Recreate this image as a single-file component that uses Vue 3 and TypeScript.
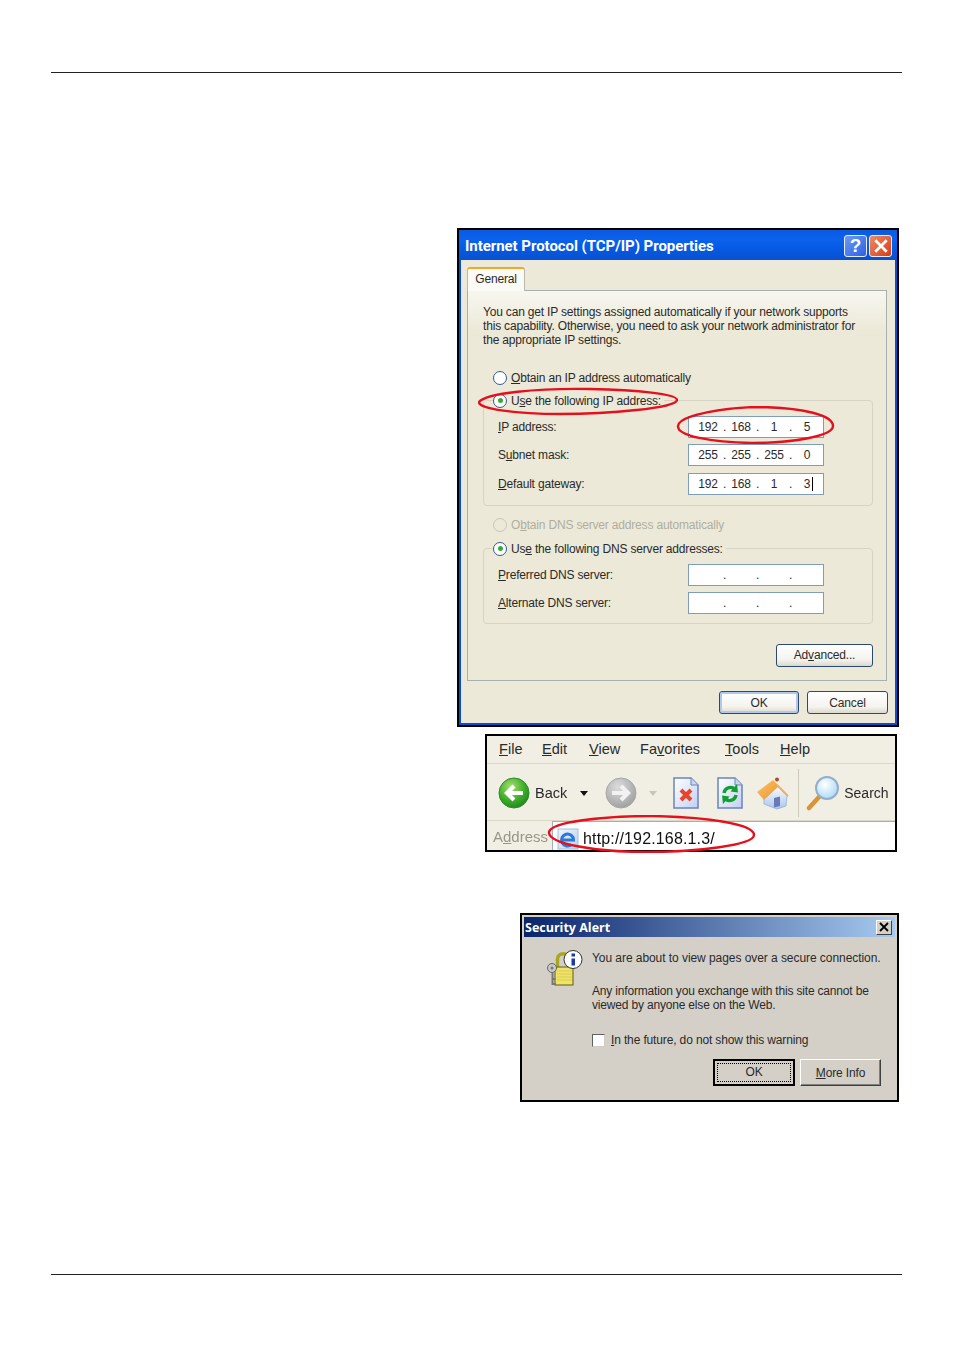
<script setup lang="ts">
interface IpRow {
  pre: string
  key: string
  post: string
  octets: string[]
  caret?: boolean
}

const ipRows: IpRow[] = [
  { pre: '', key: 'I', post: 'P address:', octets: ['192', '168', '1', '5'] },
  { pre: 'S', key: 'u', post: 'bnet mask:', octets: ['255', '255', '255', '0'] },
  { pre: '', key: 'D', post: 'efault gateway:', octets: ['192', '168', '1', '3'], caret: true },
]

const dnsRows: IpRow[] = [
  { pre: '', key: 'P', post: 'referred DNS server:', octets: ['', '', '', ''] },
  { pre: '', key: 'A', post: 'lternate DNS server:', octets: ['', '', '', ''] },
]

const menus = [
  { key: 'F', post: 'ile', pre: '', width: 43 },
  { key: 'E', post: 'dit', pre: '', width: 47 },
  { key: 'V', post: 'iew', pre: '', width: 51 },
  { key: 'v', post: 'orites', pre: 'Fa', width: 85 },
  { key: 'T', post: 'ools', pre: '', width: 55 },
  { key: 'H', post: 'elp', pre: '', width: 40 },
]
</script>

<template>
  <div class="page">
    <hr class="rule" />

    <div class="shots">
      <!-- TCP/IP dialog -->
      <section class="xp">
        <div class="xp-inner">
          <header class="xp-title">
            <span class="xp-title-text">Internet Protocol (TCP/IP) Properties</span>
            <span class="cap-btn cap-help">?</span>
            <span class="cap-btn cap-close">
              <svg viewBox="0 0 14 14" width="16" height="16">
                <path d="M2 2 L12 12 M12 2 L2 12" stroke="#fff" stroke-width="2.4" />
              </svg>
            </span>
          </header>

          <div class="xp-body">
            <div class="tab">General</div>
            <div class="panel">
              <p class="intro">
                You can get IP settings assigned automatically if your network supports<br />
                this capability. Otherwise, you need to ask your network administrator for<br />
                the appropriate IP settings.
              </p>

              <label class="radio-line first">
                <span class="radio"></span>
                <span><u>O</u>btain an IP address automatically</span>
              </label>

              <fieldset class="group group-ip">
                <legend class="radio-line">
                  <span class="radio on"></span>
                  <span>U<u>s</u>e the following IP address:</span>
                </legend>
                <div v-for="row in ipRows" :key="row.post" class="ip-row">
                  <span class="ip-label">{{ row.pre }}<u>{{ row.key }}</u>{{ row.post }}</span>
                  <span class="ip-field">
                    <template v-for="(o, i) in row.octets" :key="i">
                      <span class="oct" :class="{ caret: row.caret && i === 3 }">{{ o }}</span>
                      <span v-if="i < 3" class="dot">.</span>
                    </template>
                  </span>
                </div>
              </fieldset>

              <label class="radio-line off">
                <span class="radio"></span>
                <span>O<u>b</u>tain DNS server address automatically</span>
              </label>

              <fieldset class="group group-dns">
                <legend class="radio-line">
                  <span class="radio on"></span>
                  <span>Us<u>e</u> the following DNS server addresses:</span>
                </legend>
                <div v-for="row in dnsRows" :key="row.post" class="ip-row">
                  <span class="ip-label">{{ row.pre }}<u>{{ row.key }}</u>{{ row.post }}</span>
                  <span class="ip-field">
                    <template v-for="(o, i) in row.octets" :key="i">
                      <span class="oct">{{ o }}</span>
                      <span v-if="i < 3" class="dot">.</span>
                    </template>
                  </span>
                </div>
              </fieldset>

              <div class="adv-row">
                <button class="xp-btn adv">Ad<u>v</u>anced...</button>
              </div>
            </div>

            <div class="xp-actions">
              <button class="xp-btn ok">OK</button>
              <button class="xp-btn cancel">Cancel</button>
            </div>
          </div>
        </div>

        <svg class="ring ring-radio" viewBox="0 0 200 30" width="200" height="30">
          <path d="M1 15 C8 6 60 1 112 2 C160 3 199 7 199 13 C199 21 130 27 82 27 C40 27 0 22 1 15 Z" fill="none" stroke="#e6101c" stroke-width="2.4" />
        </svg>
        <svg class="ring ring-ip" viewBox="0 0 159 38" width="159" height="38">
          <path d="M2 20 C3 9 50 1 86 1 C127 2 157 9 157 20 C157 30 117 37 76 37 C35 36 1 30 2 20 Z" fill="none" stroke="#e6101c" stroke-width="2.4" />
        </svg>
      </section>

      <!-- Browser toolbar -->
      <section class="browser">
        <nav class="menu">
          <span v-for="m in menus" :key="m.key" class="menu-item" :style="{ width: m.width + 'px' }">{{ m.pre }}<u>{{ m.key }}</u>{{ m.post }}</span>
        </nav>

        <div class="toolbar">
          <svg class="tb-ico back" viewBox="0 0 32 32" width="32" height="32">
            <defs>
              <radialGradient id="gr" cx="0.4" cy="0.3" r="0.8">
                <stop offset="0" stop-color="#a8e070" />
                <stop offset="0.55" stop-color="#3fae2a" />
                <stop offset="1" stop-color="#1a7d1a" />
              </radialGradient>
              <radialGradient id="gy" cx="0.4" cy="0.3" r="0.8">
                <stop offset="0" stop-color="#dcdcdc" />
                <stop offset="1" stop-color="#9a9a9a" />
              </radialGradient>
              <linearGradient id="pg" x1="0" y1="0" x2="1" y2="1">
                <stop offset="0" stop-color="#ffffff" />
                <stop offset="1" stop-color="#c2d0f2" />
              </linearGradient>
              <linearGradient id="wall" x1="0" y1="0" x2="0" y2="1">
                <stop offset="0" stop-color="#fdfdff" />
                <stop offset="1" stop-color="#a9c6ec" />
              </linearGradient>
              <linearGradient id="roof" x1="0" y1="0" x2="1" y2="1">
                <stop offset="0" stop-color="#fbc468" />
                <stop offset="1" stop-color="#ea9430" />
              </linearGradient>
            </defs>
            <circle cx="16" cy="16" r="15" fill="url(#gr)" stroke="#2a8a2a" />
            <path d="M25 16 H10 M16 9 L9 16 L16 23" fill="none" stroke="#fff" stroke-width="4.2" />
          </svg>
          <span class="tb-text">Back</span>
          <span class="drop"></span>

          <svg class="tb-ico fwd" viewBox="0 0 32 32" width="32" height="32">
            <circle cx="16" cy="16" r="15" fill="url(#gy)" stroke="#a5a5a5" />
            <path d="M7 16 H22 M16 9 L23 16 L16 23" fill="none" stroke="#f2f2f2" stroke-width="4.2" />
          </svg>
          <span class="drop muted"></span>

          <svg class="tb-ico stop" viewBox="0 0 28 32" width="28" height="32">
            <path d="M2 1 H19 L26 8 V31 H2 Z" fill="url(#pg)" stroke="#6a84bc" stroke-width="1.5" />
            <path d="M19 1 V8 H26" fill="#c9d6f0" stroke="#6a84bc" />
            <path d="M9 13 L19 23 M19 13 L9 23" stroke="#e8452a" stroke-width="4" />
          </svg>

          <svg class="tb-ico refresh" viewBox="0 0 28 32" width="28" height="32">
            <path d="M2 1 H19 L26 8 V31 H2 Z" fill="url(#pg)" stroke="#6a84bc" stroke-width="1.5" />
            <path d="M19 1 V8 H26" fill="#c9d6f0" stroke="#6a84bc" />
            <path d="M8 16 A6.5 6.5 0 0 1 18 11.5" fill="none" stroke="#0fa030" stroke-width="3.4" />
            <path d="M21 7 L22 15.5 L14.5 14.5 Z" fill="#0fa030" />
            <path d="M20 18 A6.5 6.5 0 0 1 10 22.5" fill="none" stroke="#0fa030" stroke-width="3.4" />
            <path d="M7 27 L6 18.5 L13.5 19.5 Z" fill="#0fa030" />
          </svg>

          <svg class="tb-ico home" viewBox="0 0 33 33" width="33" height="33">
            <path d="M8 22 L21 9 L31 19 L30 29 L21 32 L8 27 Z" fill="url(#wall)" stroke="#8fb0d8" stroke-width="0.8" />
            <path d="M18 21 L24 19.5 V29 L18 30.5 Z" fill="#6a78b8" />
            <path d="M1 15 L17 3 L23 9 L8 23 Z" fill="url(#roof)" />
            <path d="M21 8 L32 19" stroke="#f2b060" stroke-width="2" />
            <circle cx="21" cy="2.5" r="2" fill="#b84a2a" />
          </svg>

          <span class="sep"></span>

          <svg class="tb-ico lens" viewBox="0 0 36 36" width="36" height="36">
            <defs>
              <radialGradient id="gl" cx="0.4" cy="0.35" r="0.7">
                <stop offset="0" stop-color="#ffffff" />
                <stop offset="1" stop-color="#a8d8f6" />
              </radialGradient>
            </defs>
            <path d="M14 22 L4 33" stroke="#d89436" stroke-width="4.5" stroke-linecap="round" />
            <circle cx="22" cy="13" r="11" fill="url(#gl)" stroke="#93aec8" stroke-width="2" />
          </svg>
          <span class="tb-text search">Search</span>
        </div>

        <div class="address">
          <span class="addr-label">A<u>d</u>dress</span>
          <div class="addr-box">
            <svg class="ie" viewBox="0 0 22 22" width="22" height="22">
              <defs>
                <linearGradient id="iebg" x1="0" y1="0" x2="1" y2="1">
                  <stop offset="0" stop-color="#f2f6fd" />
                  <stop offset="1" stop-color="#b8cfee" />
                </linearGradient>
              </defs>
              <rect x="1" y="1" width="20" height="20" fill="url(#iebg)" stroke="#a8bddc" />
              <path d="M5 12 H16.5 A6 6 0 1 0 14.5 16.5" fill="none" stroke="#2a78d8" stroke-width="3" />
            </svg>
            <span class="url">http://192.168.1.3/</span>
          </div>
        </div>

        <svg class="ring ring-url" viewBox="0 0 210 38" width="210" height="38">
          <path d="M2 17 C4 7 55 1 105 1 C160 2 207 9 207 20 C207 30 150 37 100 37 C50 37 1 29 2 17 Z" fill="none" stroke="#e6101c" stroke-width="2.4" />
        </svg>
      </section>

      <!-- Security alert -->
      <section class="alert">
        <header class="alert-title">
          <span>Security Alert</span>
          <span class="alert-close">
            <svg viewBox="0 0 10 10" width="10" height="10">
              <path d="M1 1 L9 9 M9 1 L1 9" stroke="#000" stroke-width="1.8" />
            </svg>
          </span>
        </header>
        <div class="alert-body">
          <svg class="lock" viewBox="0 0 36 36" width="36" height="36">
            <path d="M10.5 19 V9 C10.5 2 22 2 22 9 V19" fill="none" stroke="#a8a820" stroke-width="3.5" />
            <rect x="8" y="17" width="18" height="18" fill="#f0e468" stroke="#5c5c10" />
            <path d="M10 21 H25 M10 24 H25 M10 27 H25 M10 30 H25" stroke="#d8cc50" />
            <circle cx="5" cy="18" r="4.5" fill="#c8c8c8" stroke="#666" />
            <circle cx="5" cy="18" r="1.5" fill="#777" />
            <path d="M5.5 22 V34 L9 34 M6 29 H8.5" fill="none" stroke="#777" stroke-width="2" />
            <circle cx="26" cy="9.5" r="9" fill="#fff" stroke="#333" />
            <rect x="24.5" y="8.5" width="3.5" height="7" fill="#1a3aa8" />
            <rect x="24.5" y="3.5" width="3.5" height="3" fill="#1a3aa8" />
          </svg>
          <div class="alert-copy">
            <p class="a1">You are about to view pages over a secure connection.</p>
            <p class="a2">Any information you exchange with this site cannot be<br />viewed by anyone else on the Web.</p>
            <label class="check-line">
              <span class="check"></span>
              <span><u>I</u>n the future, do not show this warning</span>
            </label>
            <div class="alert-actions">
              <button class="w2k-btn default"><span class="focus">OK</span></button>
              <button class="w2k-btn more"><u>M</u>ore Info</button>
            </div>
          </div>
        </div>
      </section>
    </div>

    <hr class="rule bottom" />
  </div>
</template>

<style>
html,
body {
  margin: 0;
  background: #fff;
}
</style>

<style scoped>
.page {
  box-sizing: border-box;
  width: 954px;
  height: 1351px;
  padding: 72px 52px 0 51px;
  display: flex;
  flex-direction: column;
  font-family: "Liberation Sans", Arial, sans-serif;
  color: #2a2a2a;
}

.rule {
  width: 100%;
  height: 1px;
  margin: 0;
  border: 0;
  background: #222;
  flex: none;
}

.rule.bottom {
  margin-top: auto;
  margin-bottom: 76px;
}

.shots {
  margin: 155px 3px 0 0;
  display: flex;
  flex-direction: column;
  align-items: flex-end;
  filter: blur(0.4px);
}

u {
  text-underline-offset: 1px;
}

/* XP dialog */
.xp {
  position: relative;
  box-sizing: border-box;
  width: 442px;
  height: 499px;
  border: 2px solid #000;
  font-size: 12px;
  letter-spacing: -0.18px;
}

.xp-inner {
  height: 100%;
  box-sizing: border-box;
  border: 2px solid #0a4fd0;
  border-top: 0;
  display: flex;
  flex-direction: column;
}

.xp-title {
  height: 30px;
  margin: 0 -2px;
  padding: 1px 5px 0 6px;
  box-sizing: border-box;
  display: flex;
  align-items: center;
  gap: 2px;
  background: linear-gradient(#0a5ae0, #0a62ec 30%, #0658e0 70%, #0a50cc);
  color: #fff;
}

.xp-title-text {
  flex: 1;
  padding-top: 1px;
  font: bold 15px Roboto, sans-serif;
  letter-spacing: -0.05px;
}

.cap-btn {
  width: 23px;
  height: 22px;
  box-sizing: border-box;
  border: 1px solid #e8eefc;
  border-radius: 3px;
  display: flex;
  align-items: center;
  justify-content: center;
  color: #fff;
  font: bold 19px "Liberation Sans", sans-serif;
  letter-spacing: 0;
}

.cap-help {
  background: linear-gradient(135deg, #6e9af2, #2c62e2);
}

.cap-close {
  background: linear-gradient(135deg, #ec8c68, #d63c14);
}

.xp-body {
  flex: 1;
  background: #ece9d8;
  padding: 7px 8px 9px 6px;
  display: flex;
  flex-direction: column;
}

.tab {
  position: relative;
  z-index: 1;
  box-sizing: border-box;
  width: 58px;
  height: 24px;
  padding-top: 3px;
  text-align: center;
  background: #fbfaf4;
  border: 1px solid #b8b8ac;
  border-top: 2px solid #f0a828;
  border-bottom: 0;
  border-radius: 3px 3px 0 0;
  margin-bottom: -1px;
}

.panel {
  box-sizing: border-box;
  height: 391px;
  padding: 14px 13px 0 15px;
  border: 1px solid #a8b0b0;
  background: linear-gradient(#f8f7ef, #ece9d8 40px);
}

.intro {
  margin: 0;
  line-height: 14.2px;
}

.radio-line {
  display: flex;
  align-items: center;
  gap: 4px;
  height: 14px;
  padding: 0;
  margin-left: 10px;
}

.radio-line.first {
  margin-top: 23px;
}

.radio-line.off {
  margin-top: 12px;
  color: #b0aea0;
}

.radio-line.off .radio {
  border-color: #c8c6b8;
  background: #ece9d8;
}

.radio {
  box-sizing: border-box;
  width: 14px;
  height: 14px;
  border: 1.5px solid #35598c;
  border-radius: 50%;
  background: #fff;
  display: flex;
  align-items: center;
  justify-content: center;
}

.radio.on::after {
  content: "";
  width: 5px;
  height: 5px;
  border-radius: 50%;
  background: #3aa83a;
}

.group {
  box-sizing: border-box;
  margin: 0;
  min-width: 0;
  padding: 0;
  border: 1px solid #d8d4c4;
  border-radius: 4px;
}

.group legend {
  padding-right: 3px;
  margin-left: 9px;
  margin-bottom: 1px;
}

.group-ip {
  margin-top: 9px;
  height: 112px;
}

.group-dns {
  margin-top: 10px;
  height: 82px;
}

.ip-row {
  display: flex;
  align-items: center;
  justify-content: space-between;
  height: 22px;
  margin-top: 6.5px;
  padding: 0 48px 0 14px;
}

.ip-row:first-of-type {
  margin-top: 7px;
}

.ip-field {
  box-sizing: border-box;
  width: 136px;
  height: 22px;
  padding-left: 5.5px;
  display: flex;
  align-items: center;
  background: #fff;
  border: 1px solid #7f9db9;
}

.oct {
  width: 27px;
  text-align: center;
  position: relative;
}

.oct.caret::after {
  content: "";
  position: absolute;
  top: 0;
  left: 18px;
  width: 1px;
  height: 14px;
  background: #000;
}

.dot {
  width: 6px;
  text-align: center;
}

.adv-row {
  display: flex;
  justify-content: flex-end;
  margin-top: 20px;
}

.xp-btn {
  box-sizing: border-box;
  height: 23px;
  padding: 0;
  font: inherit;
  letter-spacing: inherit;
  color: #2a2a2a;
  border: 1px solid #2c4a70;
  border-radius: 3px;
  background: linear-gradient(#fff, #f4f3ee 70%, #dcd8cc);
}

.adv {
  width: 97px;
}

.xp-actions {
  display: flex;
  justify-content: flex-end;
  gap: 8px;
  margin-top: 10px;
  margin-right: -1px;
}

.ok {
  width: 80px;
  box-shadow: inset 0 0 0 2px #b0c8ec;
}

.cancel {
  width: 81px;
}

.ring {
  position: absolute;
  pointer-events: none;
}

.ring-radio {
  left: 19px;
  top: 157px;
}

.ring-ip {
  left: 217px;
  top: 176px;
}

/* browser chrome */
.browser {
  position: relative;
  box-sizing: border-box;
  width: 412px;
  height: 118px;
  margin: 7px 2px 0 0;
  border: 2px solid #000;
  background: #f1efe4;
}

.menu {
  height: 25px;
  padding: 0 0 2px 12px;
  display: flex;
  align-items: center;
  font-size: 14.5px;
  letter-spacing: 0.05px;
  border-bottom: 1px solid #dcd8c8;
}

.menu-item {
  flex: none;
}

.toolbar {
  height: 54px;
  padding-top: 2px;
  display: flex;
  align-items: center;
  font-size: 14.5px;
  border-bottom: 1px solid #dcd8c8;
}

.tb-ico {
  flex: none;
}

.back {
  margin-left: 11px;
}

.tb-text {
  margin-left: 5px;
}

.drop {
  width: 0;
  height: 0;
  margin-left: 13px;
  border: 4px solid transparent;
  border-top: 5px solid #111;
  border-bottom: 0;
}

.drop.muted {
  border-top-color: #c8c6b8;
  margin-left: 12px;
}

.fwd {
  margin-left: 17px;
}

.stop {
  margin-left: 15px;
}

.refresh {
  margin-left: 16px;
}

.home {
  margin-left: 12px;
}

.sep {
  width: 1px;
  height: 48px;
  margin-left: 9px;
  background: #cfcbb8;
}

.lens {
  margin-left: 6px;
}

.search {
  margin-left: 3px;
  font-size: 14px;
}

.address {
  display: flex;
  height: 29px;
  align-items: stretch;
}

.addr-label {
  width: 65px;
  padding-left: 6px;
  box-sizing: border-box;
  line-height: 32px;
  color: #999688;
  font-size: 15px;
}

.addr-box {
  flex: 1;
  display: flex;
  align-items: center;
  background: #fff;
  border-left: 1px solid #9ab0cc;
  border-top: 1px solid #9ab0cc;
  padding: 5px 0 0 4px;
  gap: 4px;
}

.url {
  font-size: 16px;
  letter-spacing: 0.15px;
  color: #111;
}

.ring-url {
  left: 60px;
  top: 79px;
}

/* Windows 2000 alert */
.alert {
  box-sizing: border-box;
  width: 379px;
  height: 189px;
  margin-top: 61px;
  padding: 2px;
  border: 2px solid #000;
  background: #d4d0c8;
  font-size: 12px;
  letter-spacing: -0.14px;
}

.alert-title {
  height: 20px;
  padding: 0 3px 0 1px;
  display: flex;
  align-items: center;
  justify-content: space-between;
  color: #fff;
  font: bold 12.5px "Open Sans", sans-serif;
  letter-spacing: 0;
  background: linear-gradient(90deg, #0a246a, #a6caf0);
}

.alert-close {
  box-sizing: border-box;
  width: 16px;
  height: 15px;
  display: flex;
  align-items: center;
  justify-content: center;
  background: #d4d0c8;
  border: 1px solid;
  border-color: #fff #404040 #404040 #fff;
}

.alert-body {
  display: flex;
  padding: 14px 14px 0 23px;
}

.lock {
  flex: none;
  margin-top: -1px;
}

.alert-copy {
  flex: 1;
  margin-left: 9px;
}

.alert-copy p {
  margin: 0;
  line-height: 14px;
}

.alert-copy .a1 {
  letter-spacing: -0.06px;
}

.alert-copy .a2 {
  padding-top: 19px;
  letter-spacing: -0.18px;
}

.check-line {
  display: flex;
  align-items: center;
  gap: 6px;
  height: 14px;
  margin-top: 21px;
}

.check {
  box-sizing: border-box;
  width: 13px;
  height: 13px;
  background: #fff;
  border: 1px solid;
  border-color: #606060 #d0ccc4 #d0ccc4 #606060;
}

.alert-actions {
  display: flex;
  justify-content: flex-end;
  gap: 5px;
  margin-top: 12px;
}

.w2k-btn {
  box-sizing: border-box;
  width: 82px;
  height: 27px;
  padding: 0;
  font: inherit;
  letter-spacing: inherit;
  color: #2a2a2a;
  background: #d4d0c8;
  border: 1px solid;
  border-color: #fff #404040 #404040 #fff;
  box-shadow: inset -1px -1px 0 #808080;
}

.w2k-btn.more {
  width: 81px;
}

.w2k-btn.default {
  border: 2px solid #000;
  box-shadow: none;
}

.focus {
  display: block;
  margin: 2px;
  line-height: 17px;
  border: 1px dotted #000;
}
</style>
